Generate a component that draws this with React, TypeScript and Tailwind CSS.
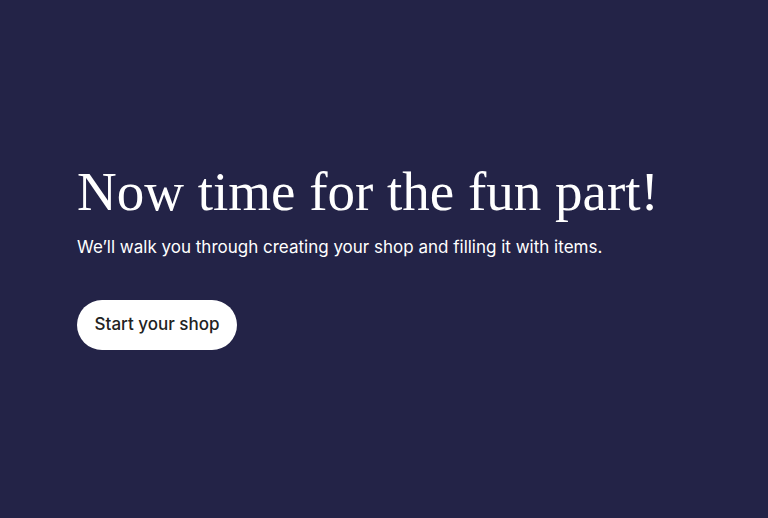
export default function App() {
  return (
    <div className="w-[768px] h-[518px] bg-[#232347] text-white pl-[77px] pt-[157px] flex flex-col items-start">
      <h1 className="text-[55px] leading-[70px] font-normal font-['Liberation_Serif',serif]">
        Now time for the fun part!
      </h1>
      <p className="mt-[8px] text-[17px] leading-[24px] font-['Inter',sans-serif]">
        We’ll walk you through creating your shop and filling it with items.
      </p>
      <button className="mt-[41px] w-[160px] h-[50px] rounded-full bg-white text-[#222222] text-[17px] font-medium font-['Inter',sans-serif]">
        Start your shop
      </button>
    </div>
  );
}
